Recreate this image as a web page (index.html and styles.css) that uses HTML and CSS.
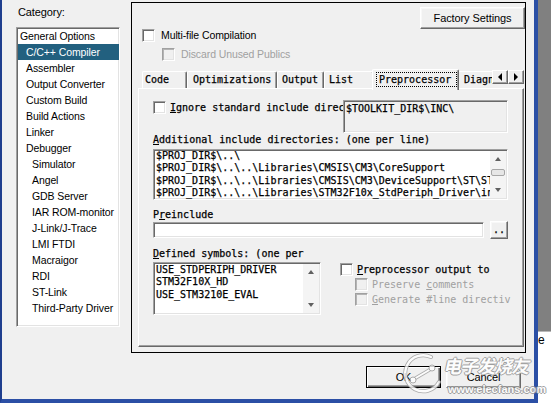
FILE: index.html
```html
<!DOCTYPE html>
<html>
<head>
<meta charset="utf-8">
<title>Options</title>
<link rel="stylesheet" href="styles.css">
</head>
<body>
<div class="screen">
  <div class="window">
    <div class="main">
      <aside class="sidebar">
        <div class="cat-label">Category:</div>
        <ul class="listbox">
          <li class="l0">General Options</li>
          <li class="l1 sel">C/C++ Compiler</li>
          <li class="l1">Assembler</li>
          <li class="l1">Output Converter</li>
          <li class="l1">Custom Build</li>
          <li class="l1">Build Actions</li>
          <li class="l1">Linker</li>
          <li class="l1">Debugger</li>
          <li class="l2">Simulator</li>
          <li class="l2">Angel</li>
          <li class="l2">GDB Server</li>
          <li class="l2">IAR ROM-monitor</li>
          <li class="l2">J-Link/J-Trace</li>
          <li class="l2">LMI FTDI</li>
          <li class="l2">Macraigor</li>
          <li class="l2">RDI</li>
          <li class="l2">ST-Link</li>
          <li class="l2">Third-Party Driver</li>
        </ul>
      </aside>
      <section class="frame">
        <div class="frame-top"><div class="btn factory">Factory Settings</div></div>
        <div class="check multi"><span class="cb"></span><span class="ctext">Multi-file Compilation</span></div>
        <div class="check discard dis"><span class="cb"></span><span class="ctext">Discard Unused Publics</span></div>
        <div class="tabs">
          <div class="tablist">
            <div class="tab t-code">Code</div>
            <div class="tab t-opt">Optimizations</div>
            <div class="tab t-out">Output</div>
            <div class="tab t-list">List</div>
            <div class="tab sel"><span class="focus">Preprocessor</span></div>
            <div class="tab t-diag">Diagnostics</div>
          </div>
          <div class="arrows">
            <div class="arr"><span class="tri-l"></span></div>
            <div class="arr"><span class="tri-r"></span></div>
          </div>
        </div>
        <div class="panel">
          <div class="row1">
            <div class="ignore"><span class="cb"></span><span class="mtext"><u>I</u>gnore standard include direc</span></div>
            <div class="field ro mono">$TOOLKIT_DIR$\INC\</div>
          </div>
          <div class="mlabel lbl-add"><u>A</u>dditional include directories: (one per line)</div>
          <div class="field memo inc">
            <div class="memo-text">
              <div class="ln">$PROJ_DIR$\..\</div>
              <div class="ln">$PROJ_DIR$\..\..\Libraries\CMSIS\CM3\CoreSupport</div>
              <div class="ln">$PROJ_DIR$\..\..\Libraries\CMSIS\CM3\DeviceSupport\ST\STM32F10x</div>
              <div class="ln">$PROJ_DIR$\..\..\Libraries\STM32F10x_StdPeriph_Driver\inc</div>
            </div>
            <div class="vscroll">
              <div class="sb-btn"><span class="tri-up"></span></div>
              <div class="sb-track"><div class="thumb"></div></div>
              <div class="sb-btn"><span class="tri-down"></span></div>
            </div>
          </div>
          <div class="mlabel lbl-pre">P<u>r</u>einclude</div>
          <div class="pre-row">
            <div class="field pre-input"></div>
            <div class="btn dots mono">..</div>
          </div>
          <div class="bottom">
            <div class="defcol">
              <div class="mlabel lbl-def"><u>D</u>efined symbols: (one per</div>
              <div class="field memo defs">
                <div class="memo-text">
                  <div class="ln">USE_STDPERIPH_DRIVER</div>
                  <div class="ln">STM32F10X_HD</div>
                  <div class="ln">USE_STM3210E_EVAL</div>
                </div>
                <div class="vscroll">
                  <div class="sb-btn"><span class="tri-up"></span></div>
                  <div class="sb-track"></div>
                  <div class="sb-btn"><span class="tri-down"></span></div>
                </div>
              </div>
            </div>
            <div class="ppcol">
              <div class="mcheck"><span class="cb"></span><span class="mtext"><u>P</u>reprocessor output to</span></div>
              <div class="mcheck sub dis"><span class="cb"></span><span class="mtext">Preserve <u>c</u>omments</span></div>
              <div class="mcheck sub dis"><span class="cb"></span><span class="mtext"><u>G</u>enerate #line directiv</span></div>
            </div>
          </div>
        </div>
      </section>
    </div>
    <div class="buttons">
      <div class="btn ok">OK</div>
      <div class="btn cancel">Cancel</div>
    </div>
  </div>
  <div class="behind">
    <div class="behind-gray"></div>
    <div class="behind-white">e</div>
  </div>
  <div class="watermark">
    <svg class="wm-logo" width="44" height="44" viewBox="0 0 44 44">
      <path d="M30 5 A18 18 0 1 0 38 30" fill="none" stroke="#9a9a9a" stroke-width="4" stroke-linecap="round"/>
      <path d="M30 5 A18 18 0 1 0 38 30" fill="none" stroke="#ffffff" stroke-width="2.4" stroke-linecap="round"/>
      <line x1="13" y1="27" x2="30" y2="17" stroke="#9a9a9a" stroke-width="3.5"/>
      <line x1="13" y1="27" x2="30" y2="17" stroke="#ffffff" stroke-width="2"/>
      <circle cx="12" cy="28" r="3" fill="#fff" stroke="#9a9a9a" stroke-width="1"/>
      <circle cx="31" cy="16" r="3" fill="#fff" stroke="#9a9a9a" stroke-width="1"/>
    </svg>
    <div class="wm-text">
      <div class="wm-cn">电子发烧友</div>
      <div class="wm-url">www.elecfans.com</div>
    </div>
  </div>
</div>
</body>
</html>
```
FILE: styles.css
```css
* { box-sizing: border-box; margin: 0; padding: 0; }
html, body { width: 551px; height: 405px; overflow: hidden; }
body {
  background: #fff;
  font-family: "Liberation Sans", Arial, sans-serif;
  font-size: 10.5px;
  letter-spacing: -0.1px;
  color: #000;
}
u { text-decoration: underline; text-underline-offset: 1px; }
.mono {
  font-family: "DejaVu Sans Mono", "Liberation Mono", monospace;
  font-size: 10px;
  letter-spacing: 0;
  -webkit-text-stroke: 0.25px currentColor;
}
.screen {
  display: flex;
  width: 551px;
  height: 405px;
  position: relative;
  overflow: hidden;
}
.window {
  flex: none;
  width: 538px;
  height: 403px;
  background: #f0f0f0;
  border-left: 2px solid #1f3e8e;
  border-right: 4px solid #2b4fa5;
  border-bottom: 4px solid #2b4fa5;
  display: flex;
  flex-direction: column;
}
.main { display: flex; height: 353px; flex: none; }

/* sidebar */
.sidebar { width: 129px; flex: none; padding: 5px 0 0 14px; }
.cat-label { line-height: 14px; padding-left: 2px; font-size: 11px; }
.listbox {
  list-style: none;
  margin-top: 8px;
  width: 104px;
  height: 300px;
  background: #fff;
  border: 1px solid;
  border-color: #a0a0a0 #fff #fff #a0a0a0;
  box-shadow: inset 1px 1px 0 #696969, inset -1px -1px 0 #e3e3e3;
  overflow: hidden;
}
.listbox li {
  height: 16px;
  line-height: 16px;
  margin-left: 1px;
  white-space: nowrap;
}
.listbox .l0 { padding-left: 2px; }
.listbox .l1 { padding-left: 8px; }
.listbox .l2 { padding-left: 14px; }
.listbox .sel { background: #22607f; color: #fff; }

/* framed options area */
.frame {
  width: 395px;
  height: 351px;
  margin-top: 2px;
  border: 1px solid #000;
  flex: none;
}
.frame-top { display: flex; justify-content: flex-end; padding-top: 4px; }
.btn {
  background: #f0f0f0;
  border: 1px solid;
  border-color: #fff #696969 #696969 #fff;
  box-shadow: inset -1px -1px 0 #a0a0a0, inset 1px 1px 0 #f8f8f8;
  display: flex;
  align-items: center;
  justify-content: center;
  white-space: nowrap;
}
.factory { width: 105px; height: 22px; font-size: 11px; }

.check { display: flex; align-items: center; height: 13px; }
.multi { margin-left: 10px; }
.discard { margin-left: 30px; margin-top: 6px; }
.ctext { margin-left: 6px; line-height: 13px; white-space: nowrap; }
.cb {
  flex: none;
  width: 13px;
  height: 13px;
  background: #fff;
  border: 1px solid;
  border-color: #a0a0a0 #fff #fff #a0a0a0;
  box-shadow: inset 1px 1px 0 #696969, inset -1px -1px 0 #e3e3e3;
}
.dis .cb {
  background: #f0f0f0;
  box-shadow: inset 1px 1px 0 #b4b4b4, inset -1px -1px 0 #e3e3e3;
}
.dis .ctext, .dis .mtext { color: #a0a0a0; }

/* tabs */
.tabs {
  display: flex;
  height: 19px;
  margin-top: 8px;
  margin-left: 6px;
  width: 386px;
  padding-left: 4px;
  position: relative;
  z-index: 1;
}
.tablist {
  flex: 1 1 auto;
  min-width: 0;
  height: 21px;
  display: flex;
  align-items: flex-start;
  overflow: hidden;
  font-family: "DejaVu Sans Mono", "Liberation Mono", monospace;
  font-size: 10px;
  letter-spacing: 0;
  -webkit-text-stroke: 0.25px currentColor;
}
.tab {
  flex: none;
  margin-top: 2px;
  height: 17px;
  line-height: 16px;
  padding-left: 5px;
  background: #f0f0f0;
  border-top: 1px solid #fff;
  border-left: 1px solid #fff;
  border-right: 1px solid #696969;
  box-shadow: inset -1px 0 0 #a0a0a0;
  border-top-left-radius: 2px;
  border-top-right-radius: 2px;
  white-space: nowrap;
}
.t-code { width: 45px; padding-left: 2px; }
.t-opt { width: 90px; padding-left: 5px; }
.t-out { width: 47px; padding-left: 4px; }
.t-list { width: 50px; padding-left: 4px; }
.t-diag { width: 80px; padding-left: 6px; }
.tab.sel {
  width: 87px;
  margin: 0 -2px;
  height: 21px;
  padding: 2px 0 0 3px;
  position: relative;
  z-index: 2;
}
.focus {
  display: block;
  width: 81px;
  height: 15px;
  line-height: 13px;
  border: 1px dotted #000;
  padding-left: 2px;
}
.arrows { flex: none; display: flex; margin-top: 1px; height: 14px; }
.arr {
  width: 16px;
  height: 14px;
  background: #f0f0f0;
  border: 1px solid;
  border-color: #fff #696969 #696969 #fff;
  box-shadow: inset -1px -1px 0 #a0a0a0;
  display: flex;
  align-items: center;
  justify-content: center;
}
.tri-l { width: 0; height: 0; border-top: 4px solid transparent; border-bottom: 4px solid transparent; border-right: 4px solid #000; }
.tri-r { width: 0; height: 0; border-top: 4px solid transparent; border-bottom: 4px solid transparent; border-left: 4px solid #000; }

/* tab panel */
.panel {
  margin-left: 6px;
  width: 386px;
  height: 259px;
  border: 1px solid;
  border-color: #fff #696969 #696969 #fff;
  box-shadow: inset -1px -1px 0 #a0a0a0;
  padding: 11px 0 0 14px;
  font-family: "DejaVu Sans Mono", "Liberation Mono", monospace;
  font-size: 10px;
  letter-spacing: 0;
  -webkit-text-stroke: 0.25px currentColor;
}
.row1 { display: flex; height: 33px; }
.ignore {
  width: 190px;
  flex: none;
  display: flex;
  align-items: flex-start;
  padding-top: 1px;
  overflow: hidden;
}
.mtext { margin-left: 4px; line-height: 13px; white-space: nowrap; }
.field {
  background: #fff;
  border: 1px solid;
  border-color: #a0a0a0 #fff #fff #a0a0a0;
  box-shadow: inset 1px 1px 0 #696969, inset -1px -1px 0 #e3e3e3;
}
.ro {
  width: 165px;
  height: 33px;
  background: #f0f0f0;
  padding: 2px 2px 0 2px;
  line-height: 12px;
  white-space: nowrap;
  overflow: hidden;
}
.mlabel { line-height: 12px; white-space: nowrap; }
.lbl-add { margin-top: 1px; }
.memo { display: flex; overflow: hidden; }
.memo-text { flex: 1 1 auto; min-width: 0; overflow: hidden; padding-left: 2px; }
.ln { line-height: 12.4px; white-space: nowrap; }
.inc { width: 355px; height: 51px; margin-top: 3px; }
.vscroll {
  flex: none;
  width: 16px;
  background: #f4f4f4;
  display: flex;
  flex-direction: column;
  margin: 1px 1px 1px 0;
}
.sb-btn { height: 16px; display: flex; align-items: center; justify-content: center; flex: none; }
.sb-track { flex: 1 1 auto; display: flex; justify-content: center; }
.thumb {
  width: 14px;
  height: 7px;
  margin-top: 2px;
  border: 1px solid #a6a6a6;
  border-radius: 2px;
  background: #e6e6e6;
}
.tri-up { width: 0; height: 0; border-left: 3.5px solid transparent; border-right: 3.5px solid transparent; border-bottom: 4px solid #606060; }
.tri-down { width: 0; height: 0; border-left: 3.5px solid transparent; border-right: 3.5px solid transparent; border-top: 4px solid #606060; }
.lbl-pre { margin-top: 9px; }
.pre-row { display: flex; align-items: center; height: 18px; }
.pre-input { width: 331px; height: 16px; }
.dots { width: 18px; height: 18px; margin-left: 6px; align-items: flex-end; padding-bottom: 3px; }
.bottom { display: flex; margin-top: 9px; }
.defcol { width: 168px; flex: none; }
.lbl-def { height: 12px; }
.defs { width: 168px; height: 53px; margin-top: 2px; }
.defs .memo-text { padding-top: 1px; }
.ppcol { width: 173px; margin-left: 19px; padding-top: 15px; overflow: hidden; }
.mcheck { display: flex; align-items: center; height: 13px; }
.mcheck.sub { margin-left: 15px; margin-top: 2px; }
.dis .mtext { -webkit-text-stroke: 0; }

/* dialog buttons */
.buttons {
  display: flex;
  justify-content: flex-end;
  gap: 5px;
  margin-top: 13px;
  padding-right: 13px;
  font-size: 11px;
}
.ok, .cancel { width: 75px; height: 22px; }
.ok {
  border: 1px solid #000;
  box-shadow: inset 1px 1px 0 #fff, inset -1px -1px 0 #696969, inset -2px -2px 0 #a0a0a0;
}

/* window behind */
.behind { flex: none; width: 13px; display: flex; flex-direction: column; }
.behind-gray { height: 332px; background: #808080; border-bottom: 1px solid #b8b8b8; flex: none; }
.behind-white { flex: 1; background: #fff; padding: 1px 0 0 0; font-size: 12px; line-height: 14px; }

/* watermark overlay */
.watermark {
  position: absolute;
  left: 401px;
  top: 352px;
  display: flex;
  align-items: flex-start;
  opacity: 0.8;
}
.wm-logo { flex: none; }
.wm-text { padding-top: 3px; }
.wm-cn {
  font-family: "Noto Sans CJK SC", sans-serif;
  font-size: 18px;
  line-height: 20px;
  font-weight: bold;
  color: #fff;
  letter-spacing: -1px;
  text-shadow: 1px 0 0 #8a8a8a, -1px 0 0 #8a8a8a, 0 1px 0 #8a8a8a, 0 -1px 0 #8a8a8a;
  transform: skewX(-12deg);
}
.wm-url {
  margin-top: 9px;
  margin-left: 3px;
  font-family: "Liberation Sans", sans-serif;
  font-size: 11px;
  line-height: 10px;
  font-weight: bold;
  color: #fff;
  letter-spacing: 0;
  text-shadow: 1px 0 0 #8a8a8a, -1px 0 0 #8a8a8a, 0 1px 0 #8a8a8a, 0 -1px 0 #8a8a8a;
}
```
